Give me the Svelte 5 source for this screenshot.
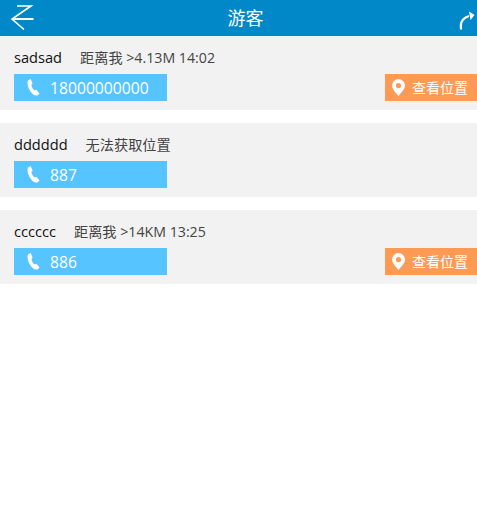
<script>
  const rows = [
    { name: 'sadsad', info: '距离我 >4.13M 14:02', phone: '18000000000', loc: true },
    { name: 'dddddd', info: '无法获取位置', phone: '887', loc: false },
    { name: 'cccccc', info: '距离我 >14KM 13:25', phone: '886', loc: true }
  ];
</script>

<div class="page">
  <header class="top">
    <svg class="back" width="24" height="26" viewBox="0 0 24 26" fill="none" stroke="#fff" stroke-width="1.6">
      <path d="M7 1 H21 L2 14 L14 24.5" />
      <path d="M2.5 14 H23.5" stroke-width="2" />
    </svg>
    <h1>游客</h1>
    <svg class="share" width="18" height="20" viewBox="0 0 18 20" fill="none">
      <path d="M2.2 18.5 C0.8 12 3.5 7 10 5" stroke="#fff" stroke-width="2.2" />
      <path d="M10 0.5 L15.5 4 L11.5 9 Z" fill="#fff" />
    </svg>
  </header>

  {#each rows as r}
    <section class="card">
      <div class="line">
        <span class="name">{r.name}</span>
        <span class="info">{r.info}</span>
      </div>
      <div class="actions">
        <div class="phone">
          <svg width="13" height="17" viewBox="0 0 13 17" fill="#fff">
            <path d="M1 1.5 L3.6 0 L5.6 4.4 L4.4 5.8 C4.6 8 6 10.6 7.8 11.6 L9.4 10.8 L12.6 14.4 L10.4 16.4 C7.6 17.4 4.6 14.6 2.6 11 C0.8 7.6 -0.2 4 1 1.5 Z" />
          </svg>
          <span>{r.phone}</span>
        </div>
        {#if r.loc}
          <div class="where">
            <svg width="13" height="17" viewBox="0 0 13 17">
              <path fill-rule="evenodd" fill="#fff" d="M6.5 0 A6.5 6.5 0 0 1 13 6.5 C13 10 9 14 6.5 17 C4 14 0 10 0 6.5 A6.5 6.5 0 0 1 6.5 0 Z M6.5 4 A2.6 2.6 0 1 0 6.5 9.2 A2.6 2.6 0 1 0 6.5 4 Z" />
            </svg>
            <span>查看位置</span>
          </div>
        {/if}
      </div>
    </section>
  {/each}
</div>

<style>
  :global(body) {
    margin: 0;
    background: #fff;
  }
  .page {
    font-family: "Open Sans", "Noto Sans CJK SC", sans-serif;
  }
  .top {
    height: 36px;
    background: #0088c8;
    display: flex;
    align-items: center;
    justify-content: space-between;
    position: relative;
    padding: 0 0 0 10px;
  }
  .top h1 {
    position: absolute;
    left: 14px;
    right: 0;
    margin: 0;
    text-align: center;
    color: #fff;
    font-size: 18px;
    font-weight: 400;
    line-height: 36px;
  }
  .share {
    margin-top: 6px;
  }
  .card {
    background: #f2f2f2;
    height: 74px;
    margin-bottom: 13px;
    padding: 0 0 0 14px;
    box-sizing: border-box;
  }
  .line {
    height: 38px;
    display: flex;
    align-items: center;
    gap: 18px;
    padding-top: 3px;
    box-sizing: border-box;
  }
  .name {
    font-size: 14.6px;
    color: #111;
  }
  .info {
    font-size: 14.2px;
    color: #444;
  }
  .actions {
    display: flex;
    justify-content: space-between;
    height: 27px;
  }
  .phone {
    width: 153px;
    background: #56c4ff;
    display: flex;
    align-items: center;
    color: #fff;
    font-size: 15.7px;
    padding-left: 13px;
    box-sizing: border-box;
    gap: 10px;
  }
  .where {
    width: 92px;
    background: #ff9a55;
    display: flex;
    align-items: center;
    color: #fff;
    font-size: 14px;
    padding-left: 7px;
    box-sizing: border-box;
    gap: 7px;
  }
  .where span {
    margin-top: -1px;
  }
</style>
